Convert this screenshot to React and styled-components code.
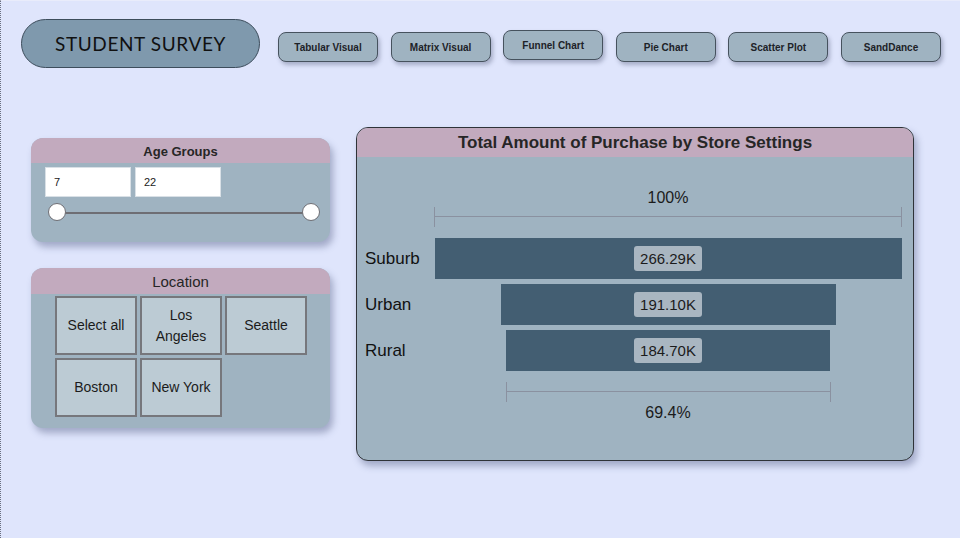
import React from "react";
import styled, { createGlobalStyle } from "styled-components";

const GlobalStyle = createGlobalStyle`
  html, body {
    margin: 0;
    padding: 0;
    background: #dfe5fc;
    font-family: "Liberation Sans", Arial, sans-serif;
  }
`;

const Page = styled.div`
  width: 960px;
  height: 538px;
  box-sizing: border-box;
  border-left: 1px dotted #6a6f80;
  border-top: 1px solid #e9ecfb;
  overflow: hidden;
`;

const TopBar = styled.div`
  display: flex;
  align-items: flex-start;
  padding: 18px 19px 0 20px;
`;

const TitlePill = styled.div`
  width: 239px;
  height: 49px;
  box-sizing: border-box;
  border: 1px solid #3d4d5c;
  border-radius: 25px;
  background: #7f99ad;
  display: flex;
  align-items: center;
  justify-content: center;
  font-family: "Lato", "Liberation Sans", sans-serif;
  font-size: 19px;
  letter-spacing: 0.6px;
  color: #111;
`;

const NavGroup = styled.div`
  flex: 1;
  display: flex;
  justify-content: space-between;
  margin-left: 18px;
  padding-top: 13px;
`;

const NavButton = styled.div`
  width: 100px;
  height: 30px;
  box-sizing: border-box;
  margin-top: ${(p) => (p.$raised ? "-2px" : "0")};
  border: 1px solid #46525e;
  border-radius: 8px;
  background: #9fb3c1;
  box-shadow: 2px 3px 4px rgba(60, 70, 100, 0.35);
  display: flex;
  align-items: center;
  justify-content: center;
  font-size: 10px;
  font-weight: bold;
  color: #1d2228;
`;

const Main = styled.div`
  display: flex;
  align-items: flex-start;
  padding: 59px 0 0 30px;
`;

const LeftColumn = styled.div`
  display: flex;
  flex-direction: column;
  gap: 26px;
  margin-top: 11px;
  width: 299px;
`;

const Card = styled.div`
  background: #9fb3c1;
  border-radius: 12px;
  overflow: hidden;
  box-shadow: 3px 5px 7px rgba(70, 80, 120, 0.4);
  height: ${(p) => p.$height}px;
`;

const CardHeader = styled.div`
  height: ${(p) => p.$height || 25}px;
  padding-top: 1px;
  box-sizing: border-box;
  background: #c2aabe;
  display: flex;
  align-items: center;
  justify-content: center;
  font-size: ${(p) => p.$size || 14}px;
  font-weight: ${(p) => (p.$bold ? "bold" : "normal")};
  color: #262626;
`;

const RangeInputs = styled.div`
  display: flex;
  gap: 4px;
  padding: 4px 0 0 14px;
`;

const NumberBox = styled.div`
  width: 86px;
  height: 30px;
  box-sizing: border-box;
  background: #fff;
  border: 1px solid #d9e0e6;
  padding-left: 8px;
  display: flex;
  align-items: center;
  font-size: 11px;
  color: #222;
`;

const SliderTrack = styled.div`
  position: relative;
  margin: 15px 19px 0 26px;
  height: 2px;
  background: #6e6e74;
`;

const Knob = styled.div`
  position: absolute;
  top: -9px;
  ${(p) => (p.$end ? "right: -9px;" : "left: -9px;")}
  width: 18px;
  height: 18px;
  box-sizing: border-box;
  border-radius: 50%;
  background: #fff;
  border: 1px solid #6e6e74;
`;

const TileGrid = styled.div`
  display: grid;
  grid-template-columns: repeat(3, 82px);
  grid-auto-rows: 59px;
  gap: 3px;
  padding: 2px 0 0 24px;
`;

const Tile = styled.div`
  box-sizing: border-box;
  background: #bccbd4;
  border: 2px solid #76777c;
  display: flex;
  align-items: center;
  justify-content: center;
  text-align: center;
  font-size: 14px;
  line-height: 21px;
  color: #1b1b1b;
`;

const FunnelCard = styled.div`
  margin-left: 26px;
  width: 558px;
  height: 334px;
  box-sizing: border-box;
  border: 1px solid #2f3338;
  border-radius: 12px;
  overflow: hidden;
  background: #9fb3c1;
  box-shadow: 3px 5px 7px rgba(70, 80, 120, 0.4);
  display: flex;
  flex-direction: column;
`;

const FunnelBody = styled.div`
  display: grid;
  grid-template-columns: 77px 468px;
  padding-top: 32px;
`;

const PercentLabel = styled.div`
  grid-column: 2;
  display: flex;
  align-items: center;
  justify-content: center;
  font-size: 16px;
  color: #1b1b1b;
  height: ${(p) => p.$height}px;
`;

const Bracket = styled.div`
  grid-column: 2;
  justify-self: center;
  position: relative;
  height: 20px;
  border-left: 1px solid #8a91a0;
  border-right: 1px solid #8a91a0;
  box-sizing: border-box;
  margin: ${(p) => p.$margin};

  &::after {
    content: "";
    position: absolute;
    left: 0;
    right: 0;
    top: 9px;
    height: 1px;
    background: #8a91a0;
  }
`;

const RowLabel = styled.div`
  grid-column: 1;
  display: flex;
  align-items: center;
  padding-left: 8px;
  font-size: 17px;
  color: #111;
  height: 41px;
  margin-bottom: 5px;
`;

const BarCell = styled.div`
  grid-column: 2;
  height: 46px;
  display: flex;
  justify-content: center;
  align-items: flex-start;
`;

const Bar = styled.div`
  height: 41px;
  background: #435e72;
  display: flex;
  align-items: center;
  justify-content: center;
`;

const ValueTag = styled.span`
  background: #a9b6c1;
  border-radius: 3px;
  padding: 4px 6px;
  font-size: 15px;
  color: #1b1b1b;
`;

const funnel = [
  { label: "Suburb", value: 266.29 },
  { label: "Urban", value: 191.1 },
  { label: "Rural", value: 184.7 },
];

const navItems = [
  "Tabular Visual",
  "Matrix Visual",
  "Funnel Chart",
  "Pie Chart",
  "Scatter Plot",
  "SandDance",
];

const FULL = 467;

export default function App() {
  const max = funnel[0].value;
  const lastWidth = Math.round((funnel[funnel.length - 1].value / max) * FULL);
  return (
    <>
      <GlobalStyle />
      <Page>
        <TopBar>
          <TitlePill>STUDENT SURVEY</TitlePill>
          <NavGroup>
            {navItems.map((n) => (
              <NavButton key={n} $raised={n === "Funnel Chart"}>
                {n}
              </NavButton>
            ))}
          </NavGroup>
        </TopBar>

        <Main>
          <LeftColumn>
            <Card $height={104}>
              <CardHeader $bold $size={13}>
                Age Groups
              </CardHeader>
              <RangeInputs>
                <NumberBox>7</NumberBox>
                <NumberBox>22</NumberBox>
              </RangeInputs>
              <SliderTrack>
                <Knob />
                <Knob $end />
              </SliderTrack>
            </Card>

            <Card $height={160}>
              <CardHeader $height={26} $size={15}>
                Location
              </CardHeader>
              <TileGrid>
                <Tile>Select all</Tile>
                <Tile>
                  Los
                  <br />
                  Angeles
                </Tile>
                <Tile>Seattle</Tile>
                <Tile>Boston</Tile>
                <Tile>New York</Tile>
              </TileGrid>
            </Card>
          </LeftColumn>

          <FunnelCard>
            <CardHeader $height={29} $size={17} $bold>
              Total Amount of Purchase by Store Settings
            </CardHeader>
            <FunnelBody>
              <PercentLabel $height={18}>100%</PercentLabel>
              <Bracket style={{ width: FULL + 1 }} $margin="0 0 11px 0" />
              {funnel.map((f) => {
                const w = Math.round((f.value / max) * FULL);
                return (
                  <React.Fragment key={f.label}>
                    <RowLabel>{f.label}</RowLabel>
                    <BarCell>
                      <Bar style={{ width: w }}>
                        <ValueTag>{f.value.toFixed(2)}K</ValueTag>
                      </Bar>
                    </BarCell>
                  </React.Fragment>
                );
              })}
              <Bracket style={{ width: lastWidth + 1 }} $margin="6px 0 0 0" />
              <PercentLabel $height={22}>
                {((funnel[funnel.length - 1].value / max) * 100).toFixed(1)}%
              </PercentLabel>
            </FunnelBody>
          </FunnelCard>
        </Main>
      </Page>
    </>
  );
}
